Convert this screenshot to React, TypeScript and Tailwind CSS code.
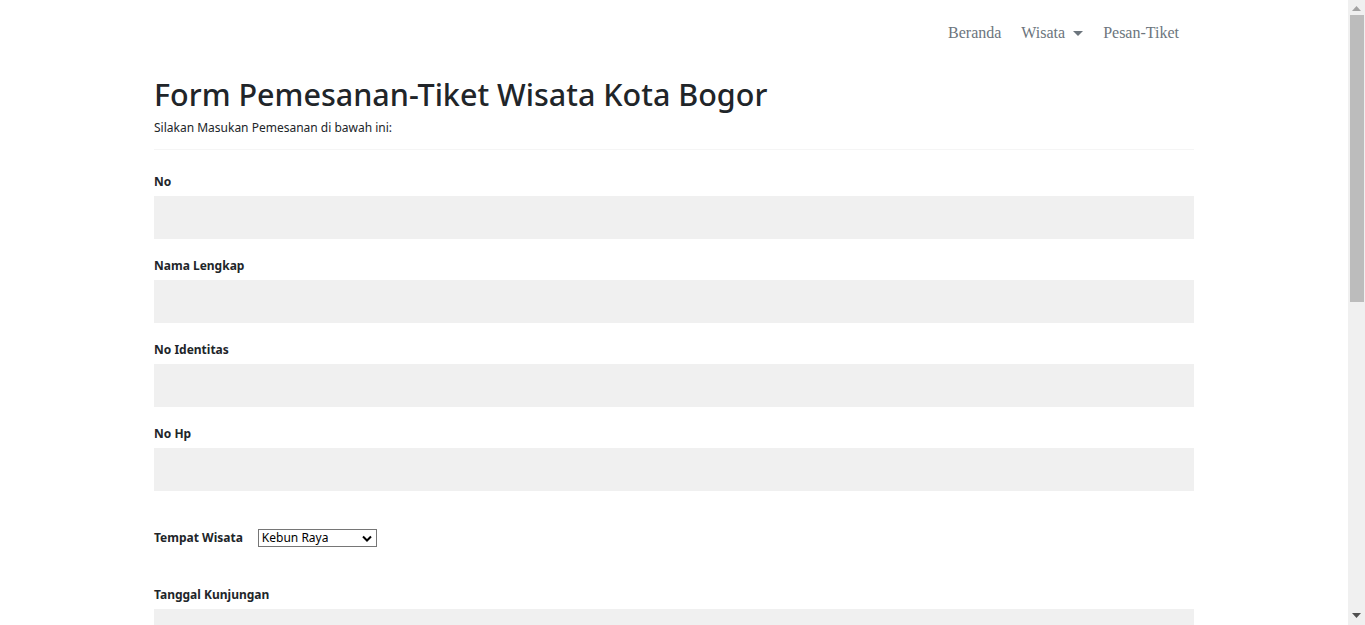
const fields = ["No", "Nama Lengkap", "No Identitas", "No Hp"];
const moreFields = ["Tanggal Kunjungan", "Jumlah Tiket", "Harga Tiket", "Total Bayar"];

function Field({ label }: { label: string }) {
  return (
    <div className="flex flex-col">
      <label className="text-[12px] font-bold leading-[20px] text-[#212529]">{label}</label>
      <div className="mt-[4px] h-[43px] w-full bg-[#f0f0f0]" />
    </div>
  );
}

// the reference shows the browser's classic scrollbar, drawn here as an overlay
function Scrollbar() {
  return (
    <div className="fixed right-0 top-0 flex h-screen w-[17px] flex-col items-center bg-[#f0f0f0]">
      <svg width="9" height="5" viewBox="0 0 9 5" className="mt-[6px]">
        <path d="M0 5 L4.5 0 L9 5 Z" fill="#a3a3a3" />
      </svg>
      <div className="mt-[4px] h-[287px] w-[14px] bg-[#bcbcbc]" />
      <div className="flex-1" />
      <svg width="9" height="5" viewBox="0 0 9 5" className="mb-[7px]">
        <path d="M0 0 L9 0 L4.5 5 Z" fill="#505050" />
      </svg>
    </div>
  );
}

export default function App() {
  return (
    <div className="min-h-[1290px] bg-white pr-[17px] font-['Noto_Sans',sans-serif] text-[#212529]">
      <nav className="mx-auto flex w-[1040px] justify-end gap-[20px] pt-[21px] font-['Liberation_Serif',serif] text-[16px] leading-[24px] text-[#6c757d]">
        <span>Beranda</span>
        <span className="flex items-center">
          Wisata
          <span className="ml-[8px] inline-block h-0 w-0 border-x-[5px] border-t-[5px] border-x-transparent border-t-[#6c757d]" />
        </span>
        <span className="mr-[15px]">Pesan-Tiket</span>
      </nav>

      <main className="mx-auto w-[1040px]">
        <h1 className="mt-[29px] text-[30.5px] font-medium leading-[40px] text-[#212529]">
          Form Pemesanan-Tiket Wisata Kota Bogor
        </h1>
        <p className="mt-[4px] text-[12px] leading-[20px]">Silakan Masukan Pemesanan di bawah ini:</p>
        <hr className="mt-[11px] border-t border-[#f5f5f5]" />

        <div className="mt-[22px] flex flex-col gap-[17px]">
          {fields.map((f) => (
            <Field key={f} label={f} />
          ))}
        </div>

        <div className="mt-[37px] flex items-center gap-[15px]">
          <label className="text-[12px] font-bold leading-[20px]">Tempat Wisata</label>
          <div className="flex h-[18px] w-[119px] items-center justify-between border border-[#767676] pl-[3px] pr-[4px] text-[12px] leading-none text-black">
            <span>Kebun Raya</span>
            <svg width="10" height="7" viewBox="0 0 10 7">
              <path d="M1 1.5 L5 5.5 L9 1.5" fill="none" stroke="#000" strokeWidth="2" />
            </svg>
          </div>
        </div>

        <div className="mt-[37px] flex flex-col gap-[17px] pb-[60px]">
          {moreFields.map((f) => (
            <Field key={f} label={f} />
          ))}
        </div>
      </main>
      <Scrollbar />
    </div>
  );
}
